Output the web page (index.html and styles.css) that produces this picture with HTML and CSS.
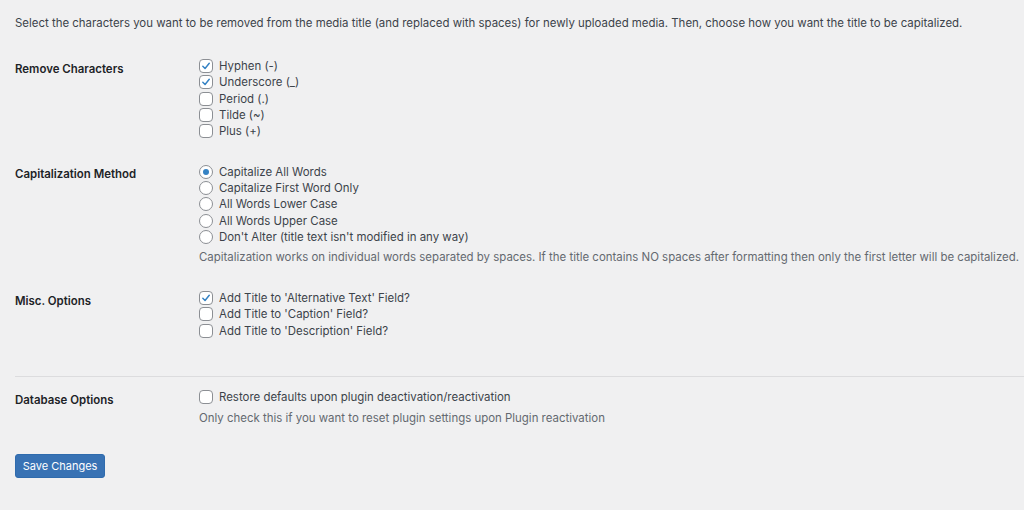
FILE: index.html
```html
<!DOCTYPE html>
<html lang="en">
<head>
    <meta charset="UTF-8">
    <meta name="viewport" content="width=device-width, initial-scale=1.0">
    <title>Media Title Settings</title>
    <link rel="stylesheet" href="styles.css">
</head>
<body>
    <div class="wrap">
        <p class="intro">Select the characters you want to be removed from the media title (and replaced with spaces) for newly uploaded media. Then, choose how you want the title to be capitalized.</p>

        <div class="row">
            <div class="row-label">Remove Characters</div>
            <div class="row-field">
                <label class="opt"><span class="box on"><svg viewBox="0 0 14 14"><path d="M3.3 7.2 L5.9 9.9 L10.8 3.8"/></svg></span>Hyphen (-)</label>
                <label class="opt"><span class="box on"><svg viewBox="0 0 14 14"><path d="M3.3 7.2 L5.9 9.9 L10.8 3.8"/></svg></span>Underscore (_)</label>
                <label class="opt"><span class="box"></span>Period (.)</label>
                <label class="opt"><span class="box"></span>Tilde (~)</label>
                <label class="opt"><span class="box"></span>Plus (+)</label>
            </div>
        </div>

        <div class="row">
            <div class="row-label">Capitalization Method</div>
            <div class="row-field">
                <label class="opt"><span class="radio on"></span>Capitalize All Words</label>
                <label class="opt"><span class="radio"></span>Capitalize First Word Only</label>
                <label class="opt"><span class="radio"></span>All Words Lower Case</label>
                <label class="opt"><span class="radio"></span>All Words Upper Case</label>
                <label class="opt"><span class="radio"></span>Don't Alter (title text isn't modified in any way)</label>
                <p class="desc">Capitalization works on individual words separated by spaces. If the title contains NO spaces after formatting then only the first letter will be capitalized.</p>
            </div>
        </div>

        <div class="row misc">
            <div class="row-label">Misc. Options</div>
            <div class="row-field">
                <label class="opt"><span class="box on"><svg viewBox="0 0 14 14"><path d="M3.3 7.2 L5.9 9.9 L10.8 3.8"/></svg></span>Add Title to 'Alternative Text' Field?</label>
                <label class="opt"><span class="box"></span>Add Title to 'Caption' Field?</label>
                <label class="opt"><span class="box"></span>Add Title to 'Description' Field?</label>
            </div>
        </div>

        <hr class="divider">

        <div class="row">
            <div class="row-label">Database Options</div>
            <div class="row-field">
                <label class="opt"><span class="box"></span>Restore defaults upon plugin deactivation/reactivation</label>
                <p class="desc last">Only check this if you want to reset plugin settings upon Plugin reactivation</p>
            </div>
        </div>

        <button class="save">Save Changes</button>
    </div>
</body>
</html>
```

FILE: styles.css
```css
body {
    margin: 0;
    background-color: #f0f0f1;
    color: #3c434a;
    font-family: Inter, "Liberation Sans", sans-serif;
    font-size: 11.45px;
}
.wrap {
    padding: 15px 0 0 15px;
}
.intro {
    margin: 0 0 15px;
    line-height: 16px;
    white-space: nowrap;
}
.row {
    display: grid;
    grid-template-columns: 184px 1fr;
    padding: 12px 0;
}
.row.misc {
    padding-top: 13px;
}
.row-label {
    padding-top: 3px;
    font-weight: 600;
    color: #1d2327;
    line-height: 16px;
}
.row-field {
    display: flex;
    flex-direction: column;
}
.opt {
    display: flex;
    align-items: center;
    gap: 6px;
    height: 16.3px;
}
.box, .radio {
    width: 14px;
    height: 14px;
    box-sizing: border-box;
    border: 1px solid #8c8f94;
    background: #fff;
    flex: none;
}
.box {
    border-radius: 4px;
}
.box svg {
    display: block;
    width: 12px;
    height: 12px;
}
.box svg path {
    fill: none;
    stroke: #3582c4;
    stroke-width: 1.7;
    stroke-linecap: round;
    stroke-linejoin: round;
}
.radio {
    border-radius: 50%;
    display: flex;
    align-items: center;
    justify-content: center;
}
.radio.on::before {
    content: "";
    width: 6px;
    height: 6px;
    border-radius: 50%;
    background: #3582c4;
}
.desc {
    margin: 4px 0 0;
    color: #646970;
    line-height: 16px;
    white-space: nowrap;
}
.desc.last {
    margin-top: 5px;
}
.divider {
    margin: 25px 0 0;
    border: none;
    border-top: 1px solid #dcdcde;
}
.save {
    margin-top: 16px;
    width: 90px;
    height: 24px;
    padding: 0;
    border: 1px solid #2f6bad;
    border-radius: 3px;
    background-color: #3872b4;
    color: #fff;
    font-family: inherit;
    font-size: 11px;
}
```
